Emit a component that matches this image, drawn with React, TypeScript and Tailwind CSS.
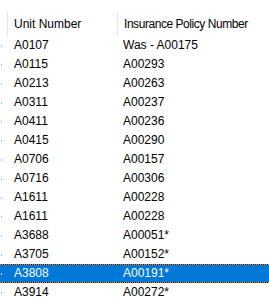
const rows: [string, string][] = [
  ["A0107", "Was - A00175"],
  ["A0115", "A00293"],
  ["A0213", "A00263"],
  ["A0311", "A00237"],
  ["A0411", "A00236"],
  ["A0415", "A00290"],
  ["A0706", "A00157"],
  ["A0716", "A00306"],
  ["A1611", "A00228"],
  ["A1611", "A00228"],
  ["A3688", "A00051*"],
  ["A3705", "A00152*"],
  ["A3808", "A00191*"],
  ["A3914", "A00272*"],
]

const selectedIndex = 12

export default function App() {
  return (
    <div
      className="w-[269px] h-[298px] overflow-hidden bg-white text-[12px] text-black"
      style={{ fontFamily: '"Liberation Sans", Arial, sans-serif' }}
    >
      {/* column headers */}
      <div className="grid grid-cols-[7px_110px_1fr] h-[36px] pt-[12px]">
        <div />
        <div className="border-l border-[#e5e5e5] pl-[6px] flex items-center">
          Unit Number
        </div>
        <div className="border-l border-[#e5e5e5] pl-[6px] flex items-center whitespace-nowrap tracking-[-0.45px]">
          Insurance Policy Number
        </div>
      </div>

      {/* list rows */}
      {rows.map(([unit, policy], i) => {
        const selected = i === selectedIndex
        return (
          <div
            key={i}
            className={
              selected
                ? "relative grid grid-cols-[7px_110px_1fr] h-[19px] items-center bg-[#0078d7] text-white"
                : "relative grid grid-cols-[7px_110px_1fr] h-[19px] items-center"
            }
          >
            <div className="flex items-center h-full">
              <span
                className={
                  selected
                    ? "ml-px w-px h-[2px] bg-[#cfe6fb]"
                    : "ml-px w-px h-[2px] bg-[#9ccaf0]"
                }
              />
            </div>
            <div className="pl-[7px] leading-none -mt-[2px]">{unit}</div>
            <div className="pl-[6px] leading-none -mt-[2px] whitespace-nowrap">{policy}</div>
            {selected && (
              <>
                <div className="absolute left-0 right-0 top-0 h-px bg-[repeating-linear-gradient(90deg,#f08a24_0_1px,#1c1c1c_1px_2px)]" />
                <div className="absolute left-0 right-0 bottom-0 h-px bg-[repeating-linear-gradient(90deg,#f08a24_0_1px,#1c1c1c_1px_2px)]" />
              </>
            )}
          </div>
        )
      })}
    </div>
  )
}
